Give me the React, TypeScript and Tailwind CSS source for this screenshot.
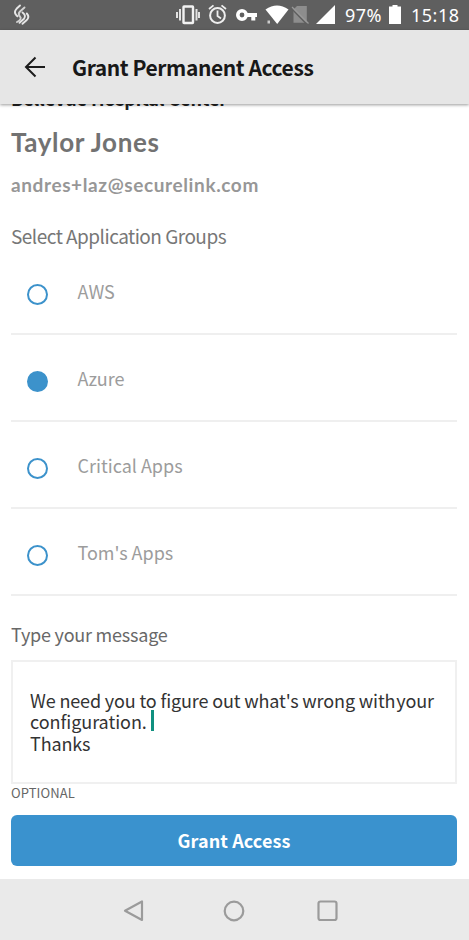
import { useState } from 'react';

const groups = ['AWS', 'Azure', 'Critical Apps', "Tom's Apps"];

function StatusBar() {
  return (
    <div className="relative z-10 h-[30px] shrink-0 bg-[#5f5f5f] text-white">
      <svg width="469" height="30" viewBox="0 0 469 30" fill="none">
        {/* brand mark */}
        <g stroke="#e6e6e6" strokeWidth="1.9" strokeLinecap="round" strokeLinejoin="round">
          <path d="M20 5.500L16.500 8.800Q13.500 12 16.300 15.200L17.500 16.300" />
          <path d="M24.500 7.500L20 11.500Q17.600 14 19.900 16.500Q22.500 19 17 22" strokeOpacity="0.85" />
          <path d="M26.800 13.500Q30 17 26.500 20.300L22.500 23.800" />
          <path d="M22.500 12.500Q26.500 15.500 24 18.800L19.500 22.800" />
        </g>
        {/* vibrate */}
        <rect x="183.500" y="6.500" width="9.500" height="16.500" rx="0.500" stroke="#f2f2f2" strokeWidth="2.400" />
        <path d="M180 9v11.500M177 12v6M196.500 9v11.500M199 12v6" stroke="#e2e2e2" strokeWidth="2" />
        {/* alarm */}
        <circle cx="217.500" cy="15.500" r="7.400" stroke="#eee" strokeWidth="2" />
        <path d="M217.500 10.500v5.500l3.500 2.500M209 9l4.500-3.600M226 9l-4.500-3.600" stroke="#eee" strokeWidth="1.800" />
        {/* vpn key */}
        <circle cx="242" cy="15" r="4.200" stroke="#fff" strokeWidth="3.600" />
        <path d="M246 13h11v4h-1.700v3.500h-4V17H246z" fill="#fff" />
        {/* wifi */}
        <path d="M265.500 9.500q11.500-8 23 0L277.200 24z" fill="#fff" />
        <path d="M267.500 20.500h2.500v3h-2.500z" fill="#ccc" />
        {/* empty sim */}
        <path d="M297 6h9.800v16.800H293.500V9.500z" fill="#8d8d8d" />
        <path d="M291.500 8.500l15.500 16" stroke="#5f5f5f" strokeWidth="1.500" />
        <path d="M292 7l16.500 16.500" stroke="#999" strokeWidth="1.300" />
        {/* signal */}
        <path d="M335 5v19h-19z" fill="#fff" />
        {/* battery */}
        <path d="M389 6.500h3.500V5h5v1.500h3.500v17.500h-12z" fill="#fff" />
      </svg>
      <span className="absolute top-[3px] left-[345px] font-[Noto_Sans] text-[18px] leading-6 tracking-[0.4px]">97%</span>
      <span className="absolute top-[3px] left-[411px] font-[Noto_Sans] text-[18px] leading-6 tracking-[0.5px]">15:18</span>
    </div>
  );
}

function Header() {
  return (
    <header className="relative z-10 flex h-[74px] shrink-0 items-center bg-[#e6e6e6] pl-6 shadow-[0_1px_3px_rgba(0,0,0,0.4)]">
      <svg width="22" height="22" viewBox="0 0 22 22" fill="none" stroke="#1c1c1c" strokeWidth="2">
        <path d="M21 11H2M11.500 1.500L2 11l9.500 9.500" />
      </svg>
      <h1 className="mt-0.5 ml-[26px] text-[21px] font-bold tracking-[-0.42px] text-[#181818]">Grant Permanent Access</h1>
    </header>
  );
}

function NavBar() {
  return (
    <nav className="mt-[13px] flex h-[61px] shrink-0 items-center bg-[#eaeaea] pt-0.5 pl-[123px]">
      <svg width="216" height="24" viewBox="0 0 216 24" fill="none" stroke="#9b9b9b" strokeWidth="2.200" strokeLinejoin="round">
        <path d="M19 2.500v18.500L2 11.700z" />
        <circle cx="111" cy="12" r="9.300" />
        <rect x="195.500" y="2.500" width="18" height="18.500" rx="2" />
      </svg>
    </nav>
  );
}

export default function App() {
  const [selected, setSelected] = useState('Azure');

  return (
    <div className="flex h-[940px] w-[469px] flex-col overflow-hidden bg-white font-['Noto_Sans_CJK_SC',sans-serif]">
      <StatusBar />
      <Header />
      <main className="flex flex-col pr-3 pl-[11px]">
        <p className="-mt-[19px] h-[26px] text-[18px] leading-[26px] font-bold tracking-[-0.1px] whitespace-nowrap text-[#222]">
          Bellevue Hospital Center
        </p>
        <h2 className="mt-[14px] h-[34px] font-[Lato] text-[26px] leading-[34px] font-bold tracking-[0.62px] text-[#727272]">Taylor Jones</h2>
        <p className="mt-[14px] h-6 font-[Lato] text-[19px] leading-6 font-bold tracking-[0.61px] text-[#979797]">andres+laz@securelink.com</p>
        <p className="mt-[27px] h-6 text-[19px] leading-6 tracking-[-0.52px] text-[#777]">Select Application Groups</p>

        <ul>
          {groups.map((group) => (
            <li
              key={group}
              onClick={() => setSelected(group)}
              className="flex h-[87px] cursor-pointer items-center border-b-2 border-[#efefef] pl-4"
            >
              <span
                className={`mt-2 size-[21px] rounded-full border-2 border-[#3c92cb] ${
                  selected === group ? 'bg-[#3c92cb]' : 'bg-white'
                }`}
              />
              <span className="ml-[29.500px] text-[18px] leading-6 text-[#9c9c9c]">{group}</span>
            </li>
          ))}
        </ul>

        <p className="mt-[26px] h-6 text-[18px] leading-6 tracking-[-0.22px] text-[#686868]">Type your message</p>
        <div className="mt-[14px] h-[124px] border-2 border-[#f0f0f0] pt-[28px] pl-[17px] text-[18px] leading-[21.300px] tracking-[-0.14px] whitespace-nowrap text-[#333]">
          <p>
            We need you to figure out what's wrong with<span className="-ml-[3px]"> your</span>
            <br />
            <span className="tracking-[-0.05px]">configuration.</span>
            <span className="-my-2 ml-1 inline-block h-[21px] w-[3px] bg-[#109080] align-[6px]" />
            <br />
            Thanks
          </p>
        </div>
        <p className="h-[18px] text-[13px] leading-[18px] tracking-[0.1px] text-[#666]">OPTIONAL</p>
        <button className="mt-[13px] h-[51px] rounded-[6px] bg-[#3a92ce] text-[18px] font-bold tracking-[0.1px] text-white">Grant Access</button>
      </main>
      <NavBar />
    </div>
  );
}
